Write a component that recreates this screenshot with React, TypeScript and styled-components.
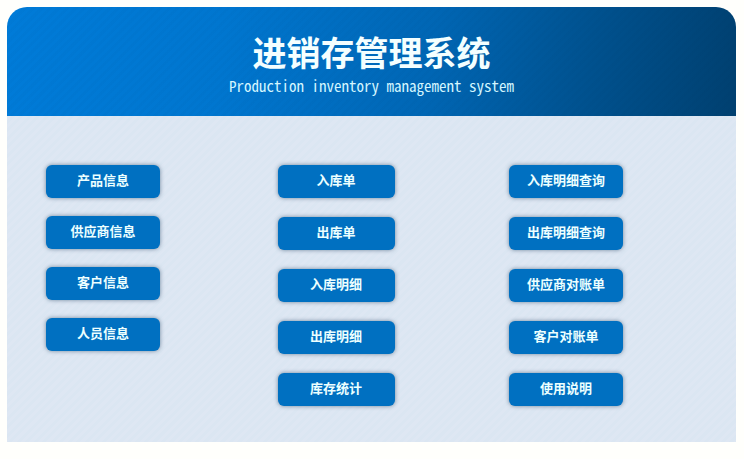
import React from "react";
import styled, { createGlobalStyle } from "styled-components";

const GlobalStyle = createGlobalStyle`
  * {
    box-sizing: border-box;
  }
  body {
    margin: 0;
    background: #fffffc;
    font-family: "Noto Sans CJK SC", sans-serif;
  }
`;

const Page = styled.main`
  margin: 7px 8px 17px 7px;
`;

const Header = styled.header`
  padding: 21px 0 20px;
  border-radius: 20px 20px 0 0;
  color: #f4ffff;
  text-align: center;
  background:
    repeating-linear-gradient(135deg, rgba(0, 30, 60, 0.02) 0 3px, transparent 3px 6px),
    linear-gradient(97deg, #007bd8 0%, #0076cf 30%, #0066b4 58%, #00518e 80%, #004070 100%);
`;

const Title = styled.h1`
  margin: 0;
  font-size: 34px;
  line-height: 48px;
  font-weight: 700;
`;

const Subtitle = styled.p`
  margin: 0;
  color: #d4f6ff;
  font-family: "Noto Sans Mono CJK SC", "Liberation Mono", monospace;
  font-size: 15px;
  line-height: 20px;
`;

const Menu = styled.nav`
  display: grid;
  grid-template-columns: 1fr 1fr 114px;
  padding: 49px 113px 36px 39px;
  background:
    repeating-linear-gradient(135deg, #dee7f3 0 3px, #dbe6f2 3px 6px);
`;

const Column = styled.div<{ $gap: number; $width: number }>`
  display: flex;
  flex-direction: column;
  gap: ${({ $gap }) => $gap}px;
  width: ${({ $width }) => $width}px;
`;

const MenuButton = styled.button`
  height: 33px;
  padding: 0 0 4px;
  border: 0;
  border-radius: 6px;
  background: #0070c1;
  box-shadow: 0 0 4px rgba(40, 70, 100, 0.6);
  color: #ecffff;
  font-family: inherit;
  font-size: 13px;
  font-weight: 700;
  line-height: 20px;
  white-space: nowrap;
  cursor: pointer;
`;

const columns = [
  { gap: 18, width: 114, items: ["产品信息", "供应商信息", "客户信息", "人员信息"] },
  { gap: 19, width: 117, items: ["入库单", "出库单", "入库明细", "出库明细", "库存统计"] },
  { gap: 19, width: 114, items: ["入库明细查询", "出库明细查询", "供应商对账单", "客户对账单", "使用说明"] },
];

export default function App() {
  return (
    <>
      <GlobalStyle />
      <Page lang="zh-CN">
        <Header>
          <Title>进销存管理系统</Title>
          <Subtitle lang="en">Production inventory management system</Subtitle>
        </Header>
        <Menu>
          {columns.map(({ gap, width, items }) => (
            <Column key={items[0]} $gap={gap} $width={width}>
              {items.map((label) => (
                <MenuButton type="button" key={label}>
                  {label}
                </MenuButton>
              ))}
            </Column>
          ))}
        </Menu>
      </Page>
    </>
  );
}
